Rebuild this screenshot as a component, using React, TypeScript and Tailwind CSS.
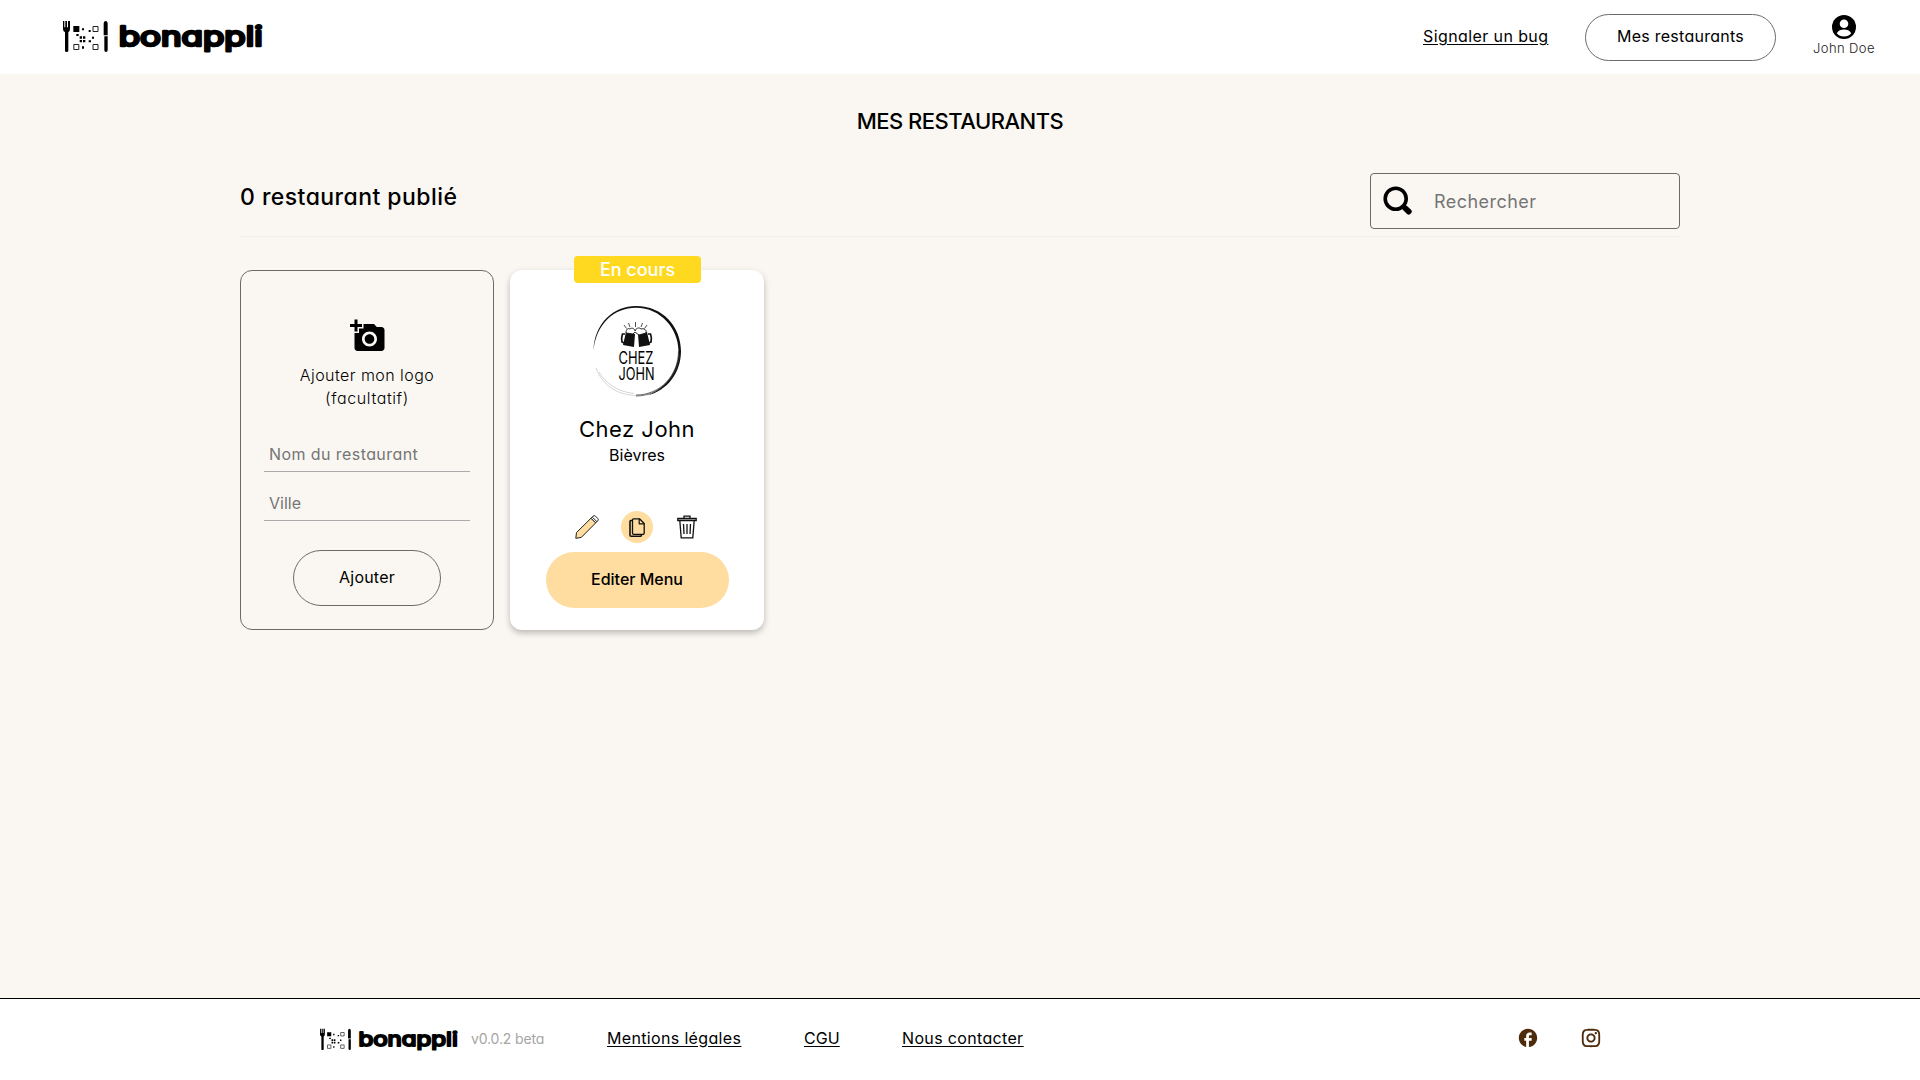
import React from "react";
import { MdAddAPhoto, MdFacebook } from "react-icons/md";
import { RiInstagramLine } from "react-icons/ri";

const Logo = ({ className }: { className: string }) => (
  <svg viewBox="68 60 600 102" className={className} role="img" aria-label="bonappli">
    {/* fork */}
    <path d="M68 63h4v19h3V63h5v19h3V63h6v24q0 8-5 10v55q0 4-5 4t-5-4V97q-6-2-6-10z" />
    {/* qr code */}
    <path d="M99 78h18v18H99zM125 85h6v6h-6zM145 90h6v6h-6zM108 102h7v6h-7zM118 109h7v7h-7zM128 109h7v7h-7zM118 120h7v7h-7zM128 120h7v7h-7zM155 110h6v6h-6zM145 121h7v6h-7zM125 139h6v7h-6z" />
    <path d="M158 79.500h15v15h-15zM100.500 133.500h15v15h-15zM158 133.500h15v15h-15z" fill="none" stroke="#222" strokeWidth="3" />
    {/* knife */}
    <path d="M190 70q1-7 6-7t6 7v36h-12zM192 109h10v41q0 6-5 6t-5-6z" />
    <text
      x="235"
      y="138"
      fontSize="82"
      fontWeight="400"
      textLength="432"
      lengthAdjust="spacingAndGlyphs"
      stroke="#000"
      strokeWidth="8"
      strokeLinejoin="round"
    >
      bonappli
    </text>
  </svg>
);

const UserIcon = () => (
  <svg viewBox="0 0 24 24" className="size-6">
    <circle cx="12" cy="12" r="12" />
    <circle cx="12" cy="8.800" r="4.300" fill="#fff" />
    <path d="M4.800 18.200C6.200 15.700 9 14.600 12 14.600s5.800 1.100 7.200 3.600C17.500 20.400 15 21.400 12 21.400s-5.500-1-7.200-3.200z" fill="#fff" />
  </svg>
);

const SearchIcon = () => (
  <svg viewBox="0 0 30 30" className="size-[30px]" fill="none" stroke="#000" strokeLinecap="round">
    <circle cx="12.700" cy="12.700" r="10.500" strokeWidth="3.600" />
    <path d="M20 20.500l1.500 1.500" strokeWidth="3" />
    <path d="M22 22l3.800 3.600" strokeWidth="5.800" />
  </svg>
);

const PencilIcon = () => (
  <svg viewBox="0 0 24 24" className="size-6" fill="#ffdc9f" stroke="#222" strokeLinejoin="round">
    <path d="M.8 23.300L1.500 17.500 16 3.200 20.700 7.900 6.300 22.400z" />
    <path d="M16 3.200L18 1.200q1.200-1.200 2.500 0l2.200 2.200q1.200 1.200 0 2.500L20.700 7.900z" fill="#fff" />
    <path d="M17.200 2l4.700 4.700" fill="none" />
  </svg>
);

const CopyIcon = () => (
  <svg viewBox="0 0 16 19" className="h-[19px] w-4" fill="none" stroke="#111" strokeLinejoin="round">
    <path d="M3 2.500H1.800Q1 2.500 1 3.500v13.700q0 1 1 1h9.500q1 0 1-1.200" strokeWidth="1.600" />
    <path d="M4.500.8h6l4.700 4.700v9.800q0 1-1 1H4.500q-1 0-1-1V1.800q0-1 1-1z" strokeWidth="1.300" />
    <path d="M10.200.8v5h5" strokeWidth="1.200" />
  </svg>
);

const TrashIcon = () => (
  <svg viewBox="-2 0 24 24" className="size-6" fill="none" stroke="#111" strokeWidth="1.300">
    <path d="M.8 3.500h18.400v2H.8zM7 3.500V1.200h6v2.300M2.800 5.500l1.400 17.300h11.600L17.200 5.500" />
    <path d="M6.500 9l.5 10M10 9v10M13.500 9l-.5 10" />
  </svg>
);

// round drawing of the restaurant, with its brush stroke outline
const RestaurantLogo = () => (
  <svg viewBox="0 0 90 92" className="h-[92px] w-[90px]">
    <path d="M1.500 46C2 18 22 1 44 1c27 0 45 21 45 45 0 22-14 40-34 44.500 17-6 31.500-23 31.500-44C86.500 24 69 2.800 44 2.800 22 2.800 4 19 1.500 46z" fill="#111" />
    <path d="M86.500 46c0 24-18 44-42.500 44M87.500 50C85 74 66 91 44 91" fill="none" stroke="#333" strokeWidth=".7" />
    <path d="M44 90.500C25 90 10 80 4 63M42 88.500C26 87 13 78 7 67" fill="none" stroke="#aaa" strokeWidth=".5" />
    <path d="M43.500 22v-5M38 22l-1.500-4M49 22l1.500-4M34.500 23.500L32 20M52.500 23.500L55 20" stroke="#222" strokeWidth=".8" />
    <path d="M34 27l9 2-1 13-11-2zM46 29l9-2 3 13-11 2z" fill="#111" />
    <path d="M33 29h-2.500q-1.500 4-.5 8l3 1.500M56 29h2.500q1.500 4 .5 8l-3 1.500" fill="none" stroke="#111" strokeWidth="1.700" />
    <path d="M34 28c0-4 2-5 4-4 2-2 5 0 5 2 1-3 4-4 6-2 3-1 6 1 5 4l-7 2-4-3-2 2z" fill="#fff" stroke="#111" strokeWidth=".9" />
    <text x="26.500" y="58.500" fontSize="17" textLength="35" lengthAdjust="spacingAndGlyphs">CHEZ</text>
    <text x="26.500" y="74.500" fontSize="17" textLength="36" lengthAdjust="spacingAndGlyphs">JOHN</text>
  </svg>
);

const Header = () => (
  <header className="flex h-[74px] items-center bg-white pr-[44px] pl-[63px]">
    <Logo className="h-[34px] w-[200px]" />
    <a href="#" className="ml-auto w-[126px] pb-0.5 text-base tracking-[0.4px] whitespace-nowrap underline underline-offset-2">Signaler un bug</a>
    <button className="ml-9 h-[47px] w-[191px] rounded-full border border-[#6b6b6b] pb-0.5 text-base tracking-[0.27px]">Mes restaurants</button>
    <div className="ml-9 flex w-[64px] flex-col items-center pb-0.5">
      <UserIcon />
      <span className="text-[13px] leading-[18px] font-light tracking-[0.4px] whitespace-nowrap text-[#222]">John Doe</span>
    </div>
  </header>
);

const AddCard = () => (
  <form className="flex h-[360px] w-[254px] flex-col items-center rounded-xl border border-[#6b6b6b] px-[23px]">
    <MdAddAPhoto className="mt-[47px] ml-[2px] size-9" />
    <p className="mt-[10px] text-center text-base leading-[23px] font-light tracking-[0.45px]">
      Ajouter mon logo
      <br />
      <span className="tracking-[0.6px]">(facultatif)</span>
    </p>
    <input className="mt-[26px] h-[36px] w-full border-b border-[#aaa] px-[5px] text-base tracking-[0.42px] placeholder-[#757575] outline-none" placeholder="Nom du restaurant" />
    <input className="mt-[13px] h-[36px] w-full border-b border-[#aaa] px-[5px] text-base placeholder-[#757575] outline-none" placeholder="Ville" />
    <button type="button" className="mt-[29px] h-[56px] w-[148px] rounded-full border border-[#6b6b6b] pb-[3px] text-base tracking-[0.2px]">Ajouter</button>
  </form>
);

const RestaurantCard = () => (
  <article className="relative flex h-[360px] w-[254px] flex-col items-center rounded-xl bg-white shadow-[0_3px_6px_rgba(0,0,0,0.25)]">
    <span className="absolute -top-[14px] left-16 h-[27px] w-[127px] rounded bg-[#ffd91f] text-center text-lg leading-[27px] font-medium text-white">En cours</span>
    <div className="mt-[35px]">
      <RestaurantLogo />
    </div>
    <h2 className="mt-[16px] text-[22px] leading-[33px] tracking-[0.5px]">Chez John</h2>
    <p className="-mt-px text-base leading-[20px]">Bièvres</p>
    <div className="mt-[46px] flex h-8 w-[124px] items-center justify-between">
      <PencilIcon />
      <span className="flex size-8 items-center justify-center rounded-full bg-[#ffdc9f]">
        <CopyIcon />
      </span>
      <TrashIcon />
    </div>
    <button className="mt-[9px] h-[56px] w-[183px] rounded-full bg-[#ffdc9f] pb-0.5 text-base font-medium">Editer Menu</button>
  </article>
);

const Footer = () => (
  <footer className="flex h-[82px] items-center border-t border-black bg-white pr-[318px] pl-[320px]">
    <Logo className="h-[23.500px] w-[138px]" />
    <span className="ml-[13px] w-[74px] pb-px text-sm tracking-[-0.15px] whitespace-nowrap text-[#a5a5a5]">v0.0.2 beta</span>
    <nav className="ml-[62px] flex gap-[62px] pb-[3px] text-base whitespace-nowrap underline underline-offset-2">
      <a href="#" className="w-[135px] tracking-[0.34px]">Mentions légales</a>
      <a href="#" className="w-[36px]">CGU</a>
      <a href="#" className="tracking-[0.34px]">Nous contacter</a>
    </nav>
    <div className="ml-auto flex gap-[41px] pb-[3px] text-[#4d2b0b]">
      <MdFacebook className="size-[22px]" />
      <RiInstagramLine className="size-[22px]" />
    </div>
  </footer>
);

const App = () => {
  return (
    <div className="flex h-[1080px] flex-col bg-[#faf7f2] font-[Inter,sans-serif] text-black [font-feature-settings:'cv11']">
      <Header />
      <main className="mx-auto w-[1440px] flex-1">
        <h1 className="mt-[31px] text-center text-[22px] leading-[33px] font-medium tracking-[-0.5px]">MES RESTAURANTS</h1>
        <div className="mt-[35px] flex h-[64px] justify-between border-b border-[#efeeea]">
          <p className="mt-[8px] text-[23px] leading-[33px] font-medium tracking-[0.45px]">0 restaurant publié</p>
          <label className="flex h-[56px] w-[310px] items-center rounded border border-[#6b6b6b] pl-3">
            <SearchIcon />
            <input className="mt-0.5 ml-[21px] w-[220px] text-lg tracking-[0.45px] placeholder-[#757575] outline-none" placeholder="Rechercher" />
          </label>
        </div>
        <div className="mt-[33px] flex gap-4">
          <AddCard />
          <RestaurantCard />
        </div>
      </main>
      <Footer />
    </div>
  );
};

export default App;
